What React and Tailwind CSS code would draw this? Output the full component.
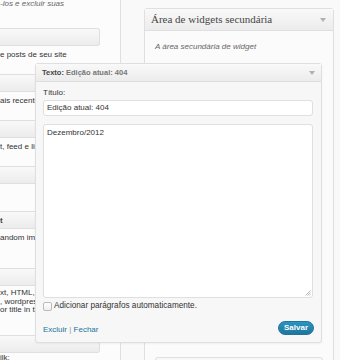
import React from "react";

function LeftBox({ className = "", children }) {
  return (
    <div className={"h-[18px] w-[100px] shrink-0 rounded-r-[3px] border border-l-0 border-[#dfdfdf] bg-gradient-to-b from-[#f9f9f9] to-[#ececec] flex items-center text-[8px] font-bold text-[#464646] " + className}>
      {children}
    </div>
  );
}

function Arrow({ className = "" }) {
  return (
    <svg width="6" height="4" viewBox="0 0 6 4" className={className}>
      <path d="M0 0 H6 L3 4 Z" fill="#b0b0b0" />
    </svg>
  );
}

export default function App() {
  return (
    <div className="w-[340px] h-[360px] overflow-hidden bg-[#f9f9f9] flex font-['Liberation_Sans',Arial,sans-serif] text-[8px] text-[#333]">
      {/* Left column: available widgets */}
      <div className="w-[121px] shrink-0 h-full border-r border-[#dfdfdf] bg-[#fcfcfc] flex flex-col overflow-hidden whitespace-nowrap leading-[9px]">
        <div className="h-[9px] italic text-[#666] -mt-[1px]">-los e excluir suas</div>
        <LeftBox className="mt-[20px]" />
        <div className="mt-[4px] h-[9px] text-[#333]">e posts de seu site</div>
        <LeftBox className="mt-[15px]" />
        <div className="mt-[4px] h-[9px]">ais recentes</div>
        <LeftBox className="mt-[15px]" />
        <div className="mt-[4px] h-[9px]">t, feed e links</div>
        <LeftBox className="mt-[15px]" />
        <LeftBox className="mt-[27px]">t</LeftBox>
        <div className="mt-[4px] h-[9px]">andom image</div>
        <LeftBox className="mt-[26px]" />
        <div className="mt-[3px] leading-[8.5px]">
          <div>xt, HTML, ou</div>
          <div>, wordpress</div>
          <div>or title in the</div>
        </div>
        <LeftBox className="mt-[20px]" />
        <div className="h-[9px]">ilk:</div>
      </div>

      {/* Gutter */}
      <div className="w-[23px] shrink-0" />

      {/* Secondary sidebar */}
      <div className="w-[190px] shrink-0 mt-[8px] self-start border border-[#dfdfdf] rounded-t-[3px] bg-[#fbfbfb] min-h-[360px] flex flex-col">
        <div className="h-[22px] border-b border-[#dfdfdf] bg-gradient-to-b from-[#f9f9f9] to-[#ececec] flex items-center justify-between pl-[6px] pr-[7px]">
          <span className="font-['Liberation_Serif',serif] text-[11px] text-[#464646]">Área de widgets secundária</span>
          <Arrow />
        </div>
        <div className="px-[10px] flex flex-col">
          <div className="mt-[11px] leading-[9px] italic text-[#666]">A área secundária de widget</div>

          {/* Expanded text widget (overflows to the left) */}
          <div className="relative z-10 mt-[12px] -ml-[120px] w-[287px] border border-[#dfdfdf] rounded-[3px] bg-[#f7f7f7] shadow-[0_1px_2px_rgba(0,0,0,0.05)] flex flex-col">
            <div className="h-[18px] border-b border-[#dfdfdf] bg-gradient-to-b from-[#f9f9f9] to-[#ececec] flex items-center justify-between pl-[6px] pr-[6px]">
              <span className="text-[7.5px] font-bold text-[#464646]">
                Texto: <span className="text-[#777]">Edição atual: 404</span>
              </span>
              <Arrow />
            </div>
            <div className="px-[7px] flex flex-col">
              <div className="mt-[7px] leading-[8px] text-[#333]">Título:</div>
              <div className="mt-[3px] h-[16px] w-[270px] border border-[#dfdfdf] rounded-[3px] bg-white flex items-center px-[3px] text-[#333]">
                Edição atual: 404
              </div>
              <div className="relative mt-[8px] h-[174px] w-[270px] border border-[#dfdfdf] rounded-[3px] bg-white px-[3px] pt-[3px] leading-[9px] text-[#333]">
                Dezembro/2012
                <svg width="6" height="6" viewBox="0 0 6 6" className="absolute right-[1px] bottom-[1px]">
                  <path d="M0.5 5.5 L5.5 0.5 M2.5 5.5 L5.5 2.5 M4.5 5.5 L5.5 4.5" stroke="#999" strokeWidth="0.7" />
                </svg>
              </div>
              <div className="mt-[4px] h-[9px] flex items-center gap-[2px]">
                <div className="w-[9px] h-[9px] border border-[#bbb] rounded-[2px] bg-gradient-to-b from-[#fff] to-[#eee]" />
                <span className="text-[#333] text-[8.2px]">Adicionar parágrafos automaticamente.</span>
              </div>
              <div className="mt-[10px] h-[14px] flex items-center justify-between">
                <div className="pt-[3px]">
                  <span className="text-[#21759b]">Excluir</span>
                  <span className="text-[#999]"> | </span>
                  <span className="text-[#21759b]">Fechar</span>
                </div>
                <div className="h-[14px] w-[36px] rounded-full border border-[#21759b] bg-gradient-to-b from-[#2a95c5] to-[#21759b] flex items-center justify-center text-white font-bold text-[8px]">
                  Salvar
                </div>
              </div>
              <div className="h-[7px]" />
            </div>
          </div>

          <div className="mt-[14px] h-[18px] border border-[#dfdfdf] rounded-[3px] bg-gradient-to-b from-[#f9f9f9] to-[#ececec]" />
        </div>
      </div>
    </div>
  );
}
